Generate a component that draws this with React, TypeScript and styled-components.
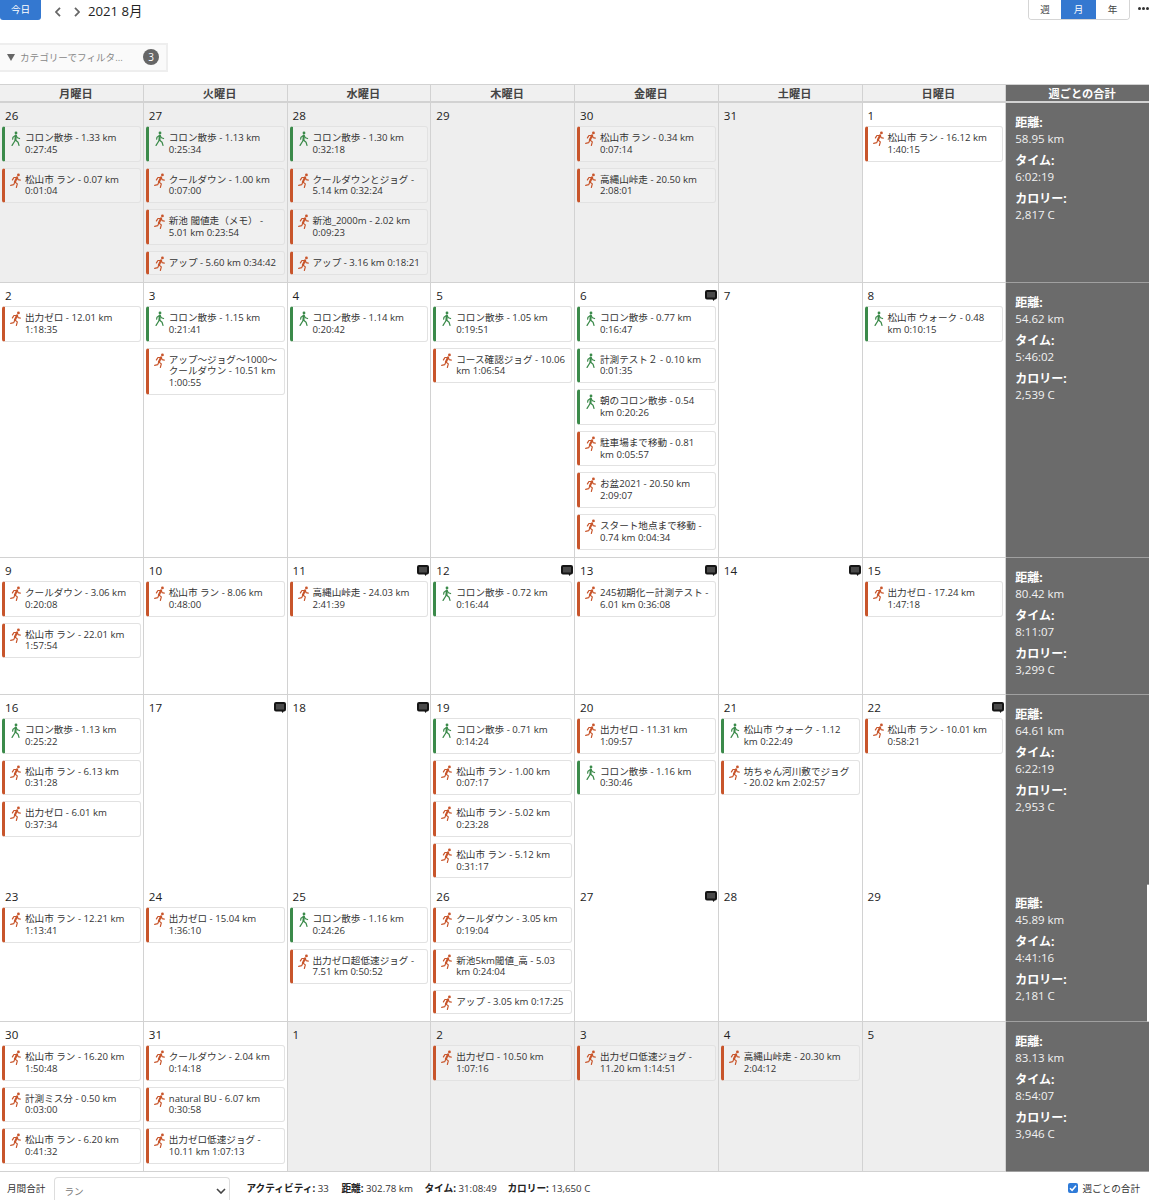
import React from "react";
import styled, { createGlobalStyle } from "styled-components";

const Global = createGlobalStyle`
  html, body { margin: 0; padding: 0; background: #fff; overflow: hidden; }
  body { font-family: "Open Sans", "Noto Sans CJK JP", sans-serif; color: #222; }
  * { box-sizing: border-box; }
`;

const Page = styled.div`
  width: 1149px;
  height: 1200px;
  display: flex;
  flex-direction: column;
  overflow: hidden;
`;
const Toolbar = styled.header`
  height: 43px;
  display: flex;
  align-items: flex-start;
  flex: none;
  position: relative;
`;
const TodayButton = styled.button`
  width: 41px;
  height: 20px;
  border: 0;
  border-radius: 0 0 3px 3px;
  background: #3478d0;
  color: #fff;
  font: 9.6px "Open Sans", "Noto Sans CJK JP", sans-serif;
  padding: 0 0 2px;
`;
const NavGroup = styled.div`
  display: flex;
  align-items: center;
  height: 23px;
  margin-left: 14px;
  gap: 13px;
`;
const Title = styled.h1`
  margin: 0 0 0 8px;
  height: 22px;
  line-height: 22px;
  font-size: 13.2px;
  font-weight: 400;
  color: #222;
`;
const Segments = styled.div`
  margin-left: auto;
  margin-right: 19px;
  display: flex;
  height: 20px;
  border: 1px solid #d5d5d5;
  border-top: 0;
  border-radius: 0 0 4px 4px;
  overflow: hidden;
`;
const Segment = styled.div<{ $active?: boolean; $w: number }>`
  width: ${(p) => p.$w}px;
  display: flex;
  align-items: center;
  justify-content: center;
  padding-bottom: 2px;
  font-size: 9.6px;
  background: ${(p) => (p.$active ? "#3478d0" : "#fff")};
  color: ${(p) => (p.$active ? "#fff" : "#444")};
`;
const Dots = styled.div`
  position: absolute;
  right: 0;
  top: 7px;
  display: flex;
  gap: 1px;
`;
const Dot = styled.span`
  width: 3px;
  height: 3px;
  border-radius: 50%;
  background: #333;
`;
const FilterRow = styled.div`
  height: 41px;
  flex: none;
`;
const Filter = styled.div`
  width: 168px;
  height: 29px;
  display: flex;
  align-items: center;
  background: #fafafa;
  border: 2px solid #eee;
  border-left: 0;
  padding-left: 7px;
  padding-bottom: 1px;
  font-size: 9.6px;
  color: #888;
`;
const Triangle = styled.span`
  width: 0;
  height: 0;
  border-left: 4px solid transparent;
  border-right: 4px solid transparent;
  border-top: 7px solid #666;
  margin-right: 5px;
`;
const Badge = styled.span`
  margin-left: auto;
  margin-right: 7px;
  width: 16px;
  height: 16px;
  border-radius: 50%;
  background: #666;
  color: #fff;
  display: flex;
  align-items: center;
  justify-content: center;
  font-size: 10px;
`;
const HeaderRow = styled.div`
  display: grid;
  grid-template-columns: repeat(7, 143.75px) 1fr;
  height: 19px;
  flex: none;
  border-top: 1px solid #d2d2d2;
  border-bottom: 2px solid #d2d2d2;
  background: #f0f0f0;
`;
const HeaderCell = styled.div<{ $total?: boolean }>`
  display: flex;
  align-items: center;
  justify-content: center;
  padding-left: 9px;
  font-size: 11.2px;
  font-weight: 700;
  color: ${(p) => (p.$total ? "#fff" : "#444")};
  background: ${(p) => (p.$total ? "#6b6b6b" : "transparent")};
  border-right: ${(p) => (p.$total ? "0" : "1px solid #d2d2d2")};
`;
const Week = styled.div<{ $h: number }>`
  display: grid;
  grid-template-columns: repeat(7, 143.75px) 1fr;
  height: ${(p) => p.$h}px;
  flex: none;
  border-bottom: 1px solid #d2d2d2;
`;
const Day = styled.div<{ $muted: boolean }>`
  background: ${(p) => (p.$muted ? "#eee" : "#fff")};
  border-right: 1px solid #d2d2d2;
  padding: 0 2px;
  position: relative;
  min-width: 0;
`;
const DayNum = styled.div`
  height: 23px;
  padding: 6.5px 0 0 3px;
  font-size: 11.6px;
  line-height: 12px;
  color: #222;
`;
const Comment = styled.span`
  position: absolute;
  right: 1px;
  top: 7px;
  display: flex;
`;
const Card = styled.div<{ $run: boolean; $muted: boolean }>`
  display: flex;
  margin-bottom: 6px;
  background: ${(p) => (p.$muted ? "#f0f0f0" : "#fff")};
  border: 1px solid #e2e2e2;
  border-left: 3px solid ${(p) => (p.$run ? "#c8552b" : "#3b8a4a")};
  border-radius: 3px;
  padding: 5px 5px 5px 5px;
  font-size: 9.6px;
  line-height: 11.8px;
  color: #333;
`;
const CardIcon = styled.span`
  flex: none;
  width: 15px;
  height: 12px;
  margin-top: -1px;
  & > svg { display: block; }
`;
const CardText = styled.span`
  min-width: 0;
`;
const Totals = styled.div<{ $inset?: boolean }>`
  background: #6b6b6b;
  color: #f2f2f2;
  padding: 13px 4px 0 9px;
  margin-right: ${(p) => (p.$inset ? "2px" : "0")};
  box-shadow: 0 1px 0 #a0a0a0;
  font-size: 11.5px;
`;
const TotalBlock = styled.div`
  margin-bottom: 8px;
`;
const TotalLabel = styled.div`
  font-size: 12px;
  font-weight: 700;
  line-height: 14.5px;
  color: #fff;
`;
const TotalValue = styled.div`
  line-height: 15.5px;
`;
const Footer = styled.footer`
  flex: 1;
  display: flex;
  align-items: center;
  font-size: 9.6px;
  color: #333;
  padding: 4px 0 0 7px;
  position: relative;
`;
const Select = styled.div`
  width: 176px;
  height: 28px;
  margin: 1px 0 -5px 9px;
  border: 1px solid #ddd;
  border-bottom: 0;
  border-radius: 4px 4px 0 0;
  display: flex;
  align-items: flex-start;
  justify-content: space-between;
  padding: 6px 3px 0 9px;
  color: #777;
  font-size: 9.6px;
`;
const Caret = styled.svg`
  margin-top: 4px;
`;
const Stats = styled.div`
  margin-left: 16px;
  display: flex;
  font-size: 9.7px;
`;
const Stat = styled.span<{ $w: number }>`
  width: ${(p) => p.$w}px;
  white-space: nowrap;
  & > b { color: #222; }
`;
const WeeklyToggle = styled.label`
  margin-left: auto;
  margin-right: 9px;
  display: flex;
  align-items: center;
  gap: 5px;
  font-size: 9.6px;
`;
const Check = styled.span`
  width: 10px;
  height: 10px;
  border-radius: 2px;
  background: #2f7bd8;
  display: flex;
  align-items: center;
  justify-content: center;
`;

const RunIcon = () => (
  <svg width="11.25" height="15" viewBox="0 0 12 16" fill="none" stroke="#c8552b" strokeLinecap="round" strokeLinejoin="round">
    <circle cx="9" cy="2" r="1.5" fill="#c8552b" stroke="none" />
    <path d="M7.6 4.6 5.2 9.6" strokeWidth="2.2" />
    <path d="M7.6 4.6 4.2 4.8 2.6 7.4M7.6 4.6 8.6 7 11 7.6M5.2 9.6 7.8 11.6 6.8 15.4M5.2 9.6 4 12.4.7 13.2" strokeWidth="1.3" />
  </svg>
);
const WalkIcon = () => (
  <svg width="11.25" height="15" viewBox="0 0 12 16" fill="none" stroke="#3b8a4a" strokeLinecap="round" strokeLinejoin="round">
    <circle cx="6.4" cy="2" r="1.5" fill="#3b8a4a" stroke="none" />
    <path d="M6.2 4.8 5.8 9.6" strokeWidth="2.2" />
    <path d="M6.2 4.6 3.2 6.6 2.8 8.8M6.2 4.6 8 7.2 10.2 8M5.8 9.6 2.2 15.4M5.8 9.6 8.6 12 9.6 15.4" strokeWidth="1.3" />
  </svg>
);
const BubbleIcon = () => (
  <svg width="12" height="11" viewBox="0 0 12 11">
    <path d="M2 0h8a2 2 0 0 1 2 2v5.5a2 2 0 0 1-2 2H9.6L8.6 11 7.6 9.5H2a2 2 0 0 1-2-2V2a2 2 0 0 1 2-2Z" fill="#151515" />
    <rect x="2" y="2" width="8" height="5.5" fill="#4a4a4a" />
  </svg>
);
const Chevron = ({ left }: { left?: boolean }) => (
  <svg width="6" height="10" viewBox="0 0 6 10" fill="none" stroke="#666" strokeWidth="1.8">
    <path d={left ? "M5 .8 1 5l4 4.2" : "M1 .8 5 5 1 9.2"} />
  </svg>
);

type Act = [string, string];
type DayData = { n: number; muted?: boolean; comment?: boolean; acts?: Act[] };
const r = (a: string): Act => [a, "r"];
const w = (a: string): Act => [a, "w"];

const weeks: { h: number; inset?: boolean; days: DayData[]; t: [string, string, string] }[] = [
  { h: 180, t: ["58.95 km", "6:02:19", "2,817 C"], days: [
    { n: 26, muted: true, acts: [w("コロン散歩 - 1.33 km 0:27:45"), r("松山市 ラン - 0.07 km 0:01:04")] },
    { n: 27, muted: true, acts: [w("コロン散歩 - 1.13 km 0:25:34"), r("クールダウン - 1.00 km 0:07:00"), r("新池 閾値走（メモ） - 5.01 km 0:23:54"), r("アップ - 5.60 km 0:34:42")] },
    { n: 28, muted: true, acts: [w("コロン散歩 - 1.30 km 0:32:18"), r("クールダウンとジョグ - 5.14 km 0:32:24"), r("新池_2000m - 2.02 km 0:09:23"), r("アップ - 3.16 km 0:18:21")] },
    { n: 29, muted: true },
    { n: 30, muted: true, acts: [r("松山市 ラン - 0.34 km 0:07:14"), r("高縄山峠走 - 20.50 km 2:08:01")] },
    { n: 31, muted: true },
    { n: 1, acts: [r("松山市 ラン - 16.12 km 1:40:15")] },
  ]},
  { h: 275, t: ["54.62 km", "5:46:02", "2,539 C"], days: [
    { n: 2, acts: [r("出力ゼロ - 12.01 km 1:18:35")] },
    { n: 3, acts: [w("コロン散歩 - 1.15 km 0:21:41"), r("アップ〜ジョグ〜1000〜クールダウン - 10.51 km 1:00:55")] },
    { n: 4, acts: [w("コロン散歩 - 1.14 km 0:20:42")] },
    { n: 5, acts: [w("コロン散歩 - 1.05 km 0:19:51"), r("コース確認ジョグ - 10.06 km 1:06:54")] },
    { n: 6, comment: true, acts: [w("コロン散歩 - 0.77 km 0:16:47"), w("計測テスト２ - 0.10 km 0:01:35"), w("朝のコロン散歩 - 0.54 km 0:20:26"), r("駐車場まで移動 - 0.81 km 0:05:57"), r("お盆2021 - 20.50 km 2:09:07"), r("スタート地点まで移動 - 0.74 km 0:04:34")] },
    { n: 7 },
    { n: 8, acts: [w("松山市 ウォーク - 0.48 km 0:10:15")] },
  ]},
  { h: 137, t: ["80.42 km", "8:11:07", "3,299 C"], days: [
    { n: 9, acts: [r("クールダウン - 3.06 km 0:20:08"), r("松山市 ラン - 22.01 km 1:57:54")] },
    { n: 10, acts: [r("松山市 ラン - 8.06 km 0:48:00")] },
    { n: 11, comment: true, acts: [r("高縄山峠走 - 24.03 km 2:41:39")] },
    { n: 12, comment: true, acts: [w("コロン散歩 - 0.72 km 0:16:44")] },
    { n: 13, comment: true, acts: [r("245初期化ー計測テスト - 6.01 km 0:36:08")] },
    { n: 14, comment: true },
    { n: 15, acts: [r("出力ゼロ - 17.24 km 1:47:18")] },
  ]},
  { h: 189, t: ["64.61 km", "6:22:19", "2,953 C"], days: [
    { n: 16, acts: [w("コロン散歩 - 1.13 km 0:25:22"), r("松山市 ラン - 6.13 km 0:31:28"), r("出力ゼロ - 6.01 km 0:37:34")] },
    { n: 17, comment: true },
    { n: 18, comment: true },
    { n: 19, acts: [w("コロン散歩 - 0.71 km 0:14:24"), r("松山市 ラン - 1.00 km 0:07:17"), r("松山市 ラン - 5.02 km 0:23:28"), r("松山市 ラン - 5.12 km 0:31:17")] },
    { n: 20, acts: [r("出力ゼロ - 11.31 km 1:09:57"), w("コロン散歩 - 1.16 km 0:30:46")] },
    { n: 21, acts: [w("松山市 ウォーク - 1.12 km 0:22:49"), r("坊ちゃん河川敷でジョグ - 20.02 km 2:02:57")] },
    { n: 22, comment: true, acts: [r("松山市 ラン - 10.01 km 0:58:21")] },
  ]},
  { h: 138, inset: true, t: ["45.89 km", "4:41:16", "2,181 C"], days: [
    { n: 23, acts: [r("松山市 ラン - 12.21 km 1:13:41")] },
    { n: 24, acts: [r("出力ゼロ - 15.04 km 1:36:10")] },
    { n: 25, acts: [w("コロン散歩 - 1.16 km 0:24:26"), r("出力ゼロ超低速ジョグ - 7.51 km 0:50:52")] },
    { n: 26, acts: [r("クールダウン - 3.05 km 0:19:04"), r("新池5km閾値_高 - 5.03 km 0:24:04"), r("アップ - 3.05 km 0:17:25")] },
    { n: 27, comment: true },
    { n: 28 },
    { n: 29 },
  ]},
  { h: 150, t: ["83.13 km", "8:54:07", "3,946 C"], days: [
    { n: 30, acts: [r("松山市 ラン - 16.20 km 1:50:48"), r("計測ミス分 - 0.50 km 0:03:00"), r("松山市 ラン - 6.20 km 0:41:32")] },
    { n: 31, acts: [r("クールダウン - 2.04 km 0:14:18"), r("natural BU - 6.07 km 0:30:58"), r("出力ゼロ低速ジョグ - 10.11 km 1:07:13")] },
    { n: 1, muted: true },
    { n: 2, muted: true, acts: [r("出力ゼロ - 10.50 km 1:07:16")] },
    { n: 3, muted: true, acts: [r("出力ゼロ低速ジョグ - 11.20 km 1:14:51")] },
    { n: 4, muted: true, acts: [r("高縄山峠走 - 20.30 km 2:04:12")] },
    { n: 5, muted: true },
  ]},
];

const heads = ["月曜日", "火曜日", "水曜日", "木曜日", "金曜日", "土曜日", "日曜日"];

export default function App() {
  return (
    <Page>
      <Global />
      <Toolbar>
        <TodayButton>今日</TodayButton>
        <NavGroup>
          <Chevron left />
          <Chevron />
        </NavGroup>
        <Title>2021 8月</Title>
        <Segments>
          <Segment $w={32}>週</Segment>
          <Segment $w={35} $active>月</Segment>
          <Segment $w={33}>年</Segment>
        </Segments>
        <Dots><Dot /><Dot /><Dot /></Dots>
      </Toolbar>
      <FilterRow>
        <Filter>
          <Triangle />
          カテゴリーでフィルタ...
          <Badge>3</Badge>
        </Filter>
      </FilterRow>
      <HeaderRow>
        {heads.map((h) => <HeaderCell key={h}>{h}</HeaderCell>)}
        <HeaderCell $total>週ごとの合計</HeaderCell>
      </HeaderRow>
      {weeks.map((wk, i) => (
        <Week key={i} $h={wk.h}>
          {wk.days.map((d) => (
            <Day key={d.n} $muted={!!d.muted}>
              <DayNum>{d.n}</DayNum>
              {d.comment && <Comment><BubbleIcon /></Comment>}
              {d.acts?.map((a, j) => {
                const run = a[1] === "r";
                return (
                  <Card key={j} $run={run} $muted={!!d.muted}>
                    <CardIcon>{run ? <RunIcon /> : <WalkIcon />}</CardIcon>
                    <CardText>{a[0]}</CardText>
                  </Card>
                );
              })}
            </Day>
          ))}
          <Totals $inset={wk.inset}>
            <TotalBlock><TotalLabel>距離:</TotalLabel><TotalValue>{wk.t[0]}</TotalValue></TotalBlock>
            <TotalBlock><TotalLabel>タイム:</TotalLabel><TotalValue>{wk.t[1]}</TotalValue></TotalBlock>
            <TotalBlock><TotalLabel>カロリー:</TotalLabel><TotalValue>{wk.t[2]}</TotalValue></TotalBlock>
          </Totals>
        </Week>
      ))}
      <Footer>
        月間合計
        <Select>
          ラン
          <Caret width="10" height="6" viewBox="0 0 10 6" fill="none" stroke="#444" strokeWidth="1.6"><path d="M1 1l4 4 4-4" /></Caret>
        </Select>
        <Stats>
          <Stat $w={95}><b>アクティビティ:</b> 33</Stat>
          <Stat $w={83}><b>距離:</b> 302.78 km</Stat>
          <Stat $w={83}><b>タイム:</b> 31:08:49</Stat>
          <Stat $w={100}><b>カロリー:</b> 13,650 C</Stat>
        </Stats>
        <WeeklyToggle>
          <Check>
            <svg width="8" height="8" viewBox="0 0 8 8"><path d="M1 4.2 3.1 6.3 7 1.7" fill="none" stroke="#fff" strokeWidth="1.5" /></svg>
          </Check>
          週ごとの合計
        </WeeklyToggle>
      </Footer>
    </Page>
  );
}
